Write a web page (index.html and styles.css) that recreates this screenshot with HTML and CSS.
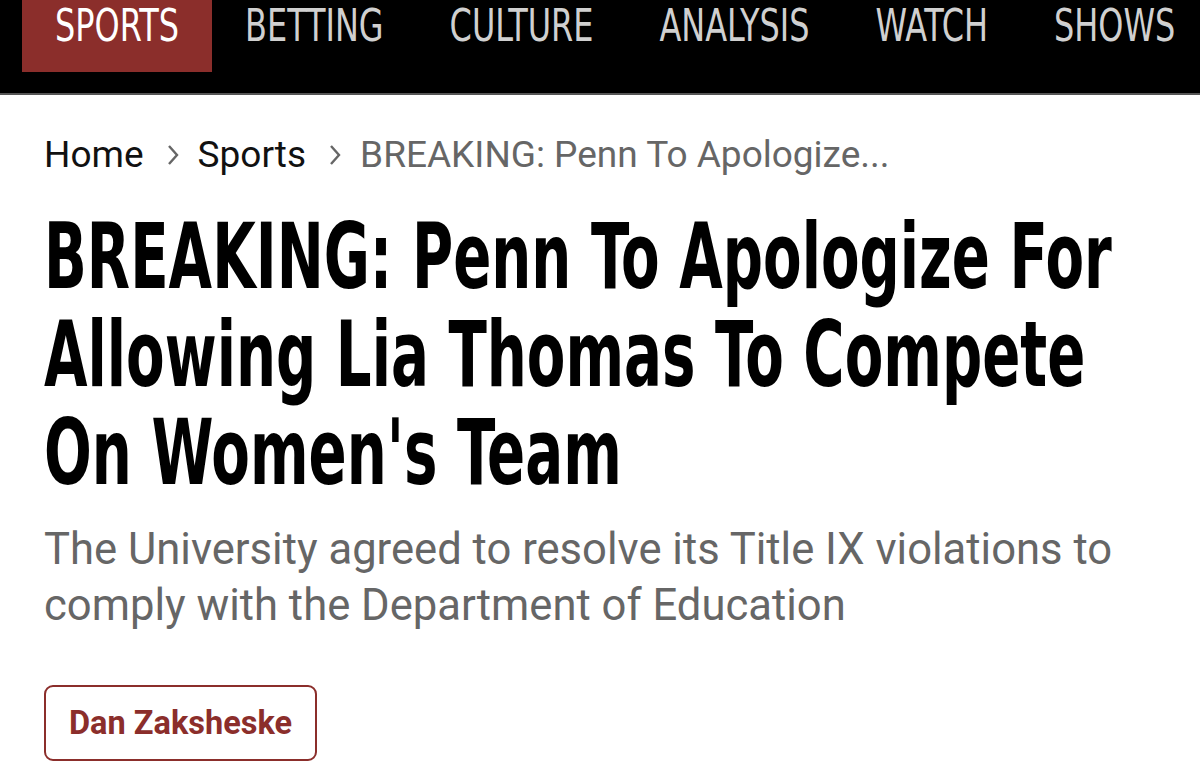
FILE: index.html
```html
<!DOCTYPE html>
<html lang="en">
<head>
  <meta charset="UTF-8">
  <meta name="viewport" content="width=device-width, initial-scale=1.0">
  <title>BREAKING: Penn To Apologize For Allowing Lia Thomas To Compete On Women's Team</title>
  <link rel="stylesheet" href="styles.css">
</head>
<body>

  <nav class="topnav">
    <a class="nav-item active" href="#"><span>SPORTS</span></a>
    <a class="nav-item" href="#"><span>BETTING</span></a>
    <a class="nav-item" href="#"><span>CULTURE</span></a>
    <a class="nav-item" href="#"><span>ANALYSIS</span></a>
    <a class="nav-item" href="#"><span>WATCH</span></a>
    <a class="nav-item" href="#"><span>SHOWS</span></a>
  </nav>

  <main class="article">
    <!-- breadcrumb -->
    <div class="crumbs">
      <a href="#">Home</a>
      <svg class="sep" width="14" height="22" viewBox="0 0 14 22"><polyline points="3,2 11,11 3,20" fill="none" stroke="#666" stroke-width="2.4"/></svg>
      <a href="#">Sports</a>
      <svg class="sep" width="14" height="22" viewBox="0 0 14 22"><polyline points="3,2 11,11 3,20" fill="none" stroke="#666" stroke-width="2.4"/></svg>
      <span class="current">BREAKING: Penn To Apologize...</span>
    </div>

    <h1 class="headline">BREAKING: Penn To Apologize For<br>Allowing Lia Thomas To Compete<br>On Women's Team</h1>
    <p class="dek">The University agreed to resolve its Title IX violations to comply with the Department of Education</p>

    <a class="author" href="#">Dan Zaksheske</a>
  </main>

</body>
</html>
```

FILE: styles.css
```css
body {
  margin: 0; padding: 0;
  background: #fff;
  font-family: Roboto, "Liberation Sans", sans-serif;
}
a { text-decoration: none; }

.topnav {
  background: #000;
  border-bottom: 2px solid #555;
  box-sizing: border-box;
  height: 95px;
  display: flex;
  padding-left: 22px;
}
.nav-item {
  font-family: "DejaVu Sans Condensed", sans-serif;
  font-size: 35.5px;
  color: #d0d0d0;
  height: 72px;
  line-height: 52px;
  padding: 0 33px;
}
.nav-item span {
  display: inline-block;
  transform: scaleY(1.23);
}
.nav-item.active {
  background: #8b2e2b;
  color: #fff;
}

.article {
  padding: 0 44px;
}
.crumbs {
  margin-top: 38px;
  font-size: 37px;
  display: flex;
  align-items: center;
  gap: 11px;
}
.crumbs a { color: #111; margin-right: 11px; }
.crumbs .sep { margin-right: 7px; }
.crumbs .current { color: #666; }

.headline {
  font-family: "DejaVu Sans Condensed", sans-serif;
  font-weight: bold;
  font-size: 91px;
  line-height: 98px;
  color: #000;
  white-space: nowrap;
  transform: scaleX(0.687);
  transform-origin: left top;
  margin: 32px 0 0;
}
.dek {
  font-size: 43.6px;
  line-height: 56px;
  color: #666;
  margin: 20px 0 0;
}
.author {
  display: inline-block;
  margin-top: 51px;
  border: 2px solid #8b2e2b;
  border-radius: 9px;
  color: #8b2e2b;
  font-weight: bold;
  font-size: 32.5px;
  padding: 17px 23px;
}
```
